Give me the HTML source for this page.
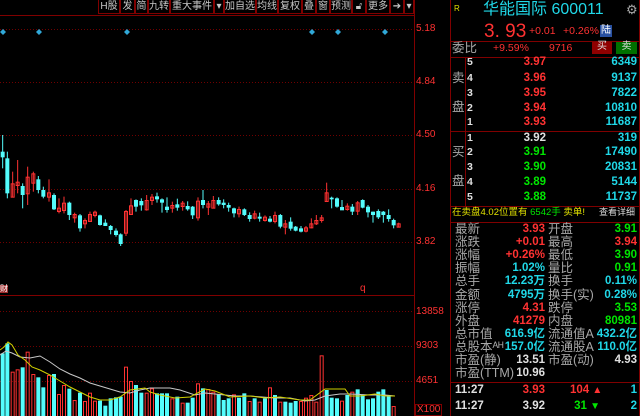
<!DOCTYPE html><html><head><meta charset="utf-8"><style>
body{margin:0;background:#000;width:640px;height:416px;overflow:hidden;position:relative;font-family:"Liberation Sans","Noto Sans CJK SC",sans-serif;}
.t{position:absolute;white-space:nowrap;line-height:1;}
.r{color:#ff3232}.g{color:#00e600}.c{color:#20d8e8}.w{color:#e0e0e0}.gr{color:#a8a8a8}.y{color:#e0e000}
.tb{position:absolute;top:0;height:14px;border:1px solid #800000;border-top:none;box-sizing:border-box;color:#c8c8c8;font-size:10px;line-height:13px;text-align:center}
.lbl{position:absolute;font-size:12.5px;color:#a8a8a8;line-height:1;white-space:nowrap}
.v{position:absolute;font-size:11.5px;line-height:1;text-align:right;white-space:nowrap;font-weight:bold}
</style></head><body>
<svg id="ch" width="640" height="416" style="position:absolute;left:0;top:0"></svg>
<div class="tb" style="left:98px;width:22px">H股</div>
<div class="tb" style="left:120px;width:15px">发</div>
<div class="tb" style="left:135px;width:13px">简</div>
<div class="tb" style="left:148px;width:22px">九转</div>
<div class="tb" style="left:170px;width:44px">重大事件</div>
<div class="tb" style="left:214px;width:10px">▾</div>
<div class="tb" style="left:224px;width:32px">加自选</div>
<div class="tb" style="left:256px;width:22px">均线</div>
<div class="tb" style="left:278px;width:24px">复权</div>
<div class="tb" style="left:302px;width:14px">叠</div>
<div class="tb" style="left:316px;width:14px">窗</div>
<div class="tb" style="left:330px;width:22px">预测</div>
<div class="tb" style="left:352px;width:14px">🔓︎</div>
<div class="tb" style="left:366px;width:24px">更多</div>
<div class="tb" style="left:390px;width:14px">➔</div>
<div class="tb" style="left:404px;width:10px">▾</div>
<div class="t r" style="left:416px;top:24px;font-size:10px">5.18</div>
<div class="t r" style="left:416px;top:77px;font-size:10px">4.84</div>
<div class="t r" style="left:416px;top:130px;font-size:10px">4.50</div>
<div class="t r" style="left:416px;top:184px;font-size:10px">4.16</div>
<div class="t r" style="left:416px;top:237px;font-size:10px">3.82</div>
<div class="t r" style="left:416px;top:307px;font-size:10px">13858</div>
<div class="t r" style="left:416px;top:341px;font-size:10px">9303</div>
<div class="t r" style="left:416px;top:376px;font-size:10px">4651</div>
<div class="t r" style="left:415px;top:404px;font-size:10px;border:1px solid #800000;padding:0 1px">X100</div>
<div class="t" style="left:0;top:285px;font-size:8px;background:#a03030;color:#fff">财</div>
<div class="t r" style="left:360px;top:284px;font-size:10px">q</div>
<!-- right panel -->
<div class="t y" style="left:454px;top:5px;font-size:8px">R</div>
<div class="t c" style="left:483px;top:2px;font-size:16px">华能国际 600011</div>
<div class="t gr" style="left:626px;top:3px;font-size:13px">⚙</div>
<div class="t r" style="left:484px;top:22px;font-size:19px">3. 93</div>
<div class="t r" style="left:529px;top:26px;font-size:10.5px">+0.01</div>
<div class="t r" style="left:563px;top:26px;font-size:10.5px">+0.26%</div>
<div class="t" style="left:600px;top:25px;font-size:10px;background:#2850a0;color:#fff;padding:1px 1px">陆</div>
<div class="t gr" style="left:452px;top:42px;font-size:12.5px">委比</div>
<div class="t r" style="left:493px;top:43px;font-size:10.5px">+9.59%</div>
<div class="t r" style="left:549px;top:43px;font-size:10.5px">9716</div>
<div class="t" style="left:592px;top:42px;width:20px;height:12px;background:#900000;color:#ddd;font-size:10px;text-align:center">买</div>
<div class="t" style="left:616px;top:42px;width:21px;height:12px;background:#007000;color:#ddd;font-size:10px;text-align:center">卖</div>
<div class="lbl" style="left:452px;top:72px">卖</div><div class="lbl" style="left:452px;top:101px">盘</div>
<div class="lbl" style="left:452px;top:146px">买</div><div class="lbl" style="left:452px;top:175px">盘</div>
<div id="ob"></div>
<div class="t y" style="left:452px;top:208px;font-size:9.5px">在卖盘4.02位置有 <span class="g">6542手</span> 卖单!</div>
<div class="t" style="left:599px;top:208px;font-size:9px;color:#ddd">查看详细</div>
<div id="st"></div>
<script>
var NS="http://www.w3.org/2000/svg",s=document.getElementById('ch');
function el(n,a){var e=document.createElementNS(NS,n);for(var k in a)e.setAttribute(k,a[k]);s.appendChild(e);return e}
el('rect',{x:0,y:0,width:640,height:416,fill:'#000'});
[29,82,135,189,242,311,346,381].forEach(function(y){el('line',{x1:0,x2:414,y1:y+.5,y2:y+.5,stroke:'#700000','stroke-dasharray':'1,2'})});
el('line',{x1:0,x2:414,y1:15.5,y2:15.5,stroke:'#800000'});
el('line',{x1:0,x2:414,y1:295.5,y2:295.5,stroke:'#800000'});
el('line',{x1:414.5,x2:414.5,y1:0,y2:416,stroke:'#800000'});
el('line',{x1:450.5,x2:450.5,y1:0,y2:416,stroke:'#800000'});
el('line',{x1:639.5,x2:639.5,y1:0,y2:416,stroke:'#800000'});
[41,57,131,206,222,382].forEach(function(y){el('line',{x1:450,x2:640,y1:y+.5,y2:y+.5,stroke:'#800000'})});
el('line',{x1:465.5,x2:465.5,y1:57,y2:206,stroke:'#800000'});
[3,39,127,312,338,385].forEach(function(x){el('path',{d:'M'+x+' 29l3 3l-3 3l-3-3z',fill:'#30a8d8'})});
var C=[[8,35,52,-15,85,0],[22,55,160,35,175,0],[38,130,170,95,172,1],[53,125,135,60,160,1],[68,138,165,130,205,0],[83,110,160,80,195,1],[100,100,128,95,155,1],[115,118,150,108,160,0],[130,150,170,140,175,0],[147,157,170,118,185,1],[162,165,208,160,210,0],[177,206,210,175,220,1],[192,188,210,170,220,1],[208,188,225,185,240,0],[224,222,232,218,248,1],[240,226,265,222,275,0],[255,240,250,235,265,1],[270,222,243,215,245,1],[285,218,222,212,232,1],[300,226,255,224,257,0],[316,251,255,238,258,0],[332,258,270,255,283,0],[348,272,285,265,290,0],[362,283,312,280,318,0],[378,213,278,210,288,1],[393,196,222,175,225,1],[408,180,200,178,215,0],[424,183,196,175,212,0],[440,180,208,165,212,1],[456,170,180,162,195,1],[471,172,175,158,188,0],[486,178,188,175,218,0],[501,203,207,172,218,0],[517,195,203,185,218,1],[532,196,200,176,212,0],[548,191,195,183,212,1],[563,198,208,184,212,0],[578,200,226,198,237,0],[594,182,232,172,242,1],[609,180,195,150,205,0],[625,193,197,183,225,1],[640,180,203,168,205,1],[656,180,193,172,197,0],[671,188,195,178,205,0],[686,195,203,188,215,0],[702,205,220,203,232,0],[717,207,220,200,232,1],[733,208,225,205,228,0],[749,225,237,217,245,0],[764,220,233,212,238,1],[779,230,236,218,245,0],[795,233,237,226,245,1],[810,236,245,228,247,0],[825,225,243,215,250,1],[841,225,260,222,265,0],[856,253,257,240,283,1],[872,245,266,232,272,0],[887,260,272,258,274,0],[903,268,272,258,277,0],[918,265,269,258,277,1],[934,250,262,235,265,1],[949,240,250,225,255,1],[965,232,240,225,248,1],[980,157,183,128,185,1],[995,173,178,170,205,0],[1011,175,200,172,203,0],[1026,204,208,180,210,0],[1042,200,204,190,212,1],[1057,200,215,192,225,0],[1073,187,212,183,225,1],[1088,180,203,178,205,0],[1104,200,217,195,232,0],[1119,218,222,215,248,0],[1135,213,232,208,237,0],[1150,218,222,213,248,0],[1166,225,237,208,245,0],[1181,240,256,236,265,0],[1196,250,260,248,262,1]];
C.forEach(function(d){var x=d[0]/3,col=d[5]?'#ff3232':'#54fcfc';
el('line',{x1:x,x2:x,y1:140+d[3]/3,y2:140+d[4]/3,stroke:col});
var t=140+d[1]/3,b=140+d[2]/3;if(b-t<1.5){t-=1;b+=1}
if(d[5])el('rect',{x:x-1.5,y:t+.5,width:3,height:b-t,fill:'none',stroke:col});else el('rect',{x:x-2,y:t,width:4,height:b-t,fill:col});});
var V=[[250,0],[220,0],[305,1],[298,1],[292,0],[245,1],[312,1],[322,0],[352,0],[315,1],[312,0],[372,1],[345,1],[356,0],[390,1],[368,0],[393,1],[368,1],[392,1],[392,0],[407,0],[385,0],[382,0],[380,0],[290,1],[333,1],[345,0],[368,0],[368,1],[355,1],[370,0],[370,0],[370,0],[385,1],[380,0],[398,1],[398,0],[383,0],[340,1],[355,0],[357,1],[365,1],[372,0],[390,0],[385,0],[373,1],[383,0],[370,0],[393,1],[385,0],[395,1],[385,0],[352,1],[375,0],[395,1],[395,0],[398,0],[393,0],[393,1],[383,1],[375,1],[395,1],[256,1],[360,0],[383,0],[385,0],[392,1],[375,0],[365,1],[358,0],[375,0],[388,0],[385,0],[365,0],[358,0],[378,0],[408,1]];
V.forEach(function(d,i){var x=(C[i]?C[i][0]:8+i*15.5)/3,t=270+d[0]/3,col=d[1]?'#ff3232':'#54fcfc';
if(d[1])el('rect',{x:x-1.5,y:t+.5,width:3,height:416-t,fill:'none',stroke:col});else el('rect',{x:x-2,y:t,width:4,height:416-t,fill:col});});
el('polyline',{points:'0,355 6,351 12,353 20,357 30,358 40,356 50,362 60,369 70,374 80,378 90,383 100,386 110,389 120,392 130,393 140,390 150,388 160,388 170,388 180,390 195,395 205,393 215,394 235,396 250,396 275,398 290,398 305,401 315,400 325,396 340,394 350,394 370,395 385,395 395,396',fill:'none',stroke:'#c8c8c8'});
el('polyline',{points:'0,350 4,347 8,342 12,345 18,355 25,360 32,367 40,370 50,375 60,381 70,387 80,392 90,397 100,400 110,400 120,397 130,390 145,388 150,392 160,395 175,398 190,397 205,389 215,391 230,397 250,396 265,398 280,397 300,400 310,400 325,389 345,389 350,396 360,396 375,394 385,396 395,396',fill:'none',stroke:'#d0d000'});
var ob=document.getElementById('ob'),h='';
var rows=[['5','3.97','6349',57,'r'],['4','3.96','9137',73,'r'],['3','3.95','7822',88,'r'],['2','3.94','10810',103,'r'],['1','3.93','11687',117,'r'],['1','3.92','319',133,'w'],['2','3.91','17490',147,'g'],['3','3.90','20831',162,'g'],['4','3.89','5144',177,'g'],['5','3.88','11737',192,'g']];
rows.forEach(function(r){h+='<div class="v w" style="left:467px;top:'+r[3]+'px;font-size:10.5px">'+r[0]+'</div><div class="v '+r[4]+'" style="left:500px;width:46px;top:'+r[3]+'px">'+r[1]+'</div><div class="v c" style="left:580px;width:57px;top:'+r[3]+'px">'+r[2]+'</div>'});
ob.innerHTML=h;
var S=[['最新','3.93','r','开盘','3.91','g'],['涨跌','+0.01','r','最高','3.94','r'],['涨幅','+0.26%','r','最低','3.90','g'],['振幅','1.02%','c','量比','0.91','g'],['总手','12.23万','c','换手','0.11%','c'],['金额','4795万','c','换手(实)','0.28%','c'],['涨停','4.31','r','跌停','3.53','g'],['外盘','41279','r','内盘','80981','g'],['总市值','616.9亿','c','流通值A','432.2亿','c'],['总股本ᴬᴴ','157.0亿','c','流通股A','110.0亿','c'],['市盈(静)','13.51','w','市盈(动)','4.93','w'],['市盈(TTM)','10.96','w','','','w']];
h='';S.forEach(function(r,i){var y=223+i*13.1;
h+='<div class="lbl" style="left:455px;top:'+y+'px">'+r[0]+'</div><div class="v '+r[2]+'" style="left:490px;width:55px;top:'+(y+1)+'px">'+r[1]+'</div><div class="lbl" style="left:548px;top:'+y+'px">'+r[3]+'</div><div class="v '+r[5]+'" style="left:580px;width:57px;top:'+(y+1)+'px">'+r[4]+'</div>'});
h+='<div class="v w" style="left:455px;top:385px">11:27</div><div class="v r" style="left:510px;width:35px;top:385px">3.93</div><div class="v r" style="left:570px;width:30px;top:385px">104 <span style="font-size:10px">▲</span></div><div class="v c" style="left:620px;width:17px;top:385px">1</div>';
h+='<div class="v w" style="left:455px;top:401px">11:27</div><div class="v w" style="left:510px;width:35px;top:401px">3.92</div><div class="v g" style="left:570px;width:30px;top:401px">31 <span style="font-size:10px">▼</span></div><div class="v c" style="left:620px;width:17px;top:401px">2</div>';
document.getElementById('st').innerHTML=h;
</script>
</body></html>
